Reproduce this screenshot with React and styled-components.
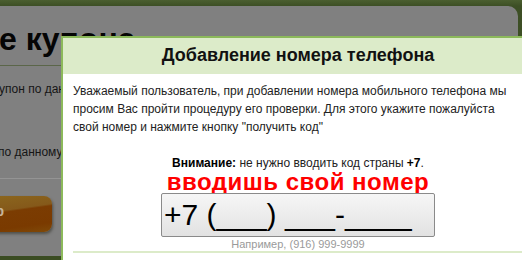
import React from 'react';
import styled, { createGlobalStyle } from 'styled-components';

const Global = createGlobalStyle`
  html, body { margin: 0; padding: 0; }
  body {
    width: 522px; height: 260px; overflow: hidden;
    background: #3c4e24;
    font-family: Arial, "Liberation Sans", sans-serif;
  }
`;

const Screen = styled.div`
  position: relative;
  width: 522px;
  height: 260px;
  overflow: hidden;
  box-sizing: border-box;
  padding: 6px 4px 4px 0;
  background: linear-gradient(#4b5f30, #3d4f25 6px, #3b4d23);
`;

const Page = styled.div`
  height: 100%;
  background: #808080;
  border-top-right-radius: 10px;
  display: flex;
  flex-direction: column;
  overflow: hidden;
`;

const PageTitle = styled.h1`
  margin: 17px 0 0 -1px;
  font: bold 32px/32px Arial, "Liberation Sans", sans-serif;
  color: #050505;
  white-space: nowrap;
`;

const Rule = styled.div`
  height: 1px;
  margin-top: ${p => p.$top}px;
  background: ${p => p.$color};
`;

const PageText = styled.div`
  margin: ${p => p.$top}px 0 0 ${p => p.$left}px;
  font-size: 12px;
  line-height: 16px;
  color: #151515;
  white-space: nowrap;
`;

const OrangeButton = styled.div`
  margin: 17px 0 0 -40px;
  width: 92px;
  height: 36px;
  box-sizing: border-box;
  border-radius: 8px;
  background: linear-gradient(172deg, #8d6a1f 0%, #85591a 42%, #7b3c02 46%, #7a3a00 80%, #7f4a08 100%);
  box-shadow: 1px 2px 3px rgba(40, 40, 30, 0.55);
  display: flex;
  align-items: center;
  justify-content: flex-end;
  padding: 0 48px 6px 0;
  font: bold 14px Arial, "Liberation Sans", sans-serif;
  color: #c7b49a;
`;

const Modal = styled.div`
  position: absolute;
  left: 61px;
  top: 36px;
  width: 474px;
  height: 260px;
  box-sizing: border-box;
  border: 2px solid #8cb95b;
  background: #fff;
  display: flex;
  flex-direction: column;
`;

const ModalHeader = styled.div`
  height: 36px;
  box-sizing: border-box;
  padding-bottom: 2px;
  background: #dcebc9;
  text-align: center;
  font: bold 18px/34px Arial, "Liberation Sans", sans-serif;
  color: #111;
  white-space: nowrap;
`;

const ModalBody = styled.div`
  padding: 8px 10px 0;
  display: flex;
  flex-direction: column;
`;

const Intro = styled.p`
  margin: 0;
  font-size: 12px;
  line-height: 18px;
  color: #222;
  white-space: nowrap;
`;

const Notice = styled.p`
  margin: 18px 0 0;
  font-size: 12px;
  line-height: 18px;
  color: #222;
  text-align: center;
  white-space: nowrap;
  b { color: #000; }
`;

const Hint = styled.div`
  font: bold 24px/20px Arial, "Liberation Sans", sans-serif;
  letter-spacing: 0.5px;
  color: #ff0000;
  text-align: center;
  white-space: nowrap;
`;

const PhoneInput = styled.input`
  display: block;
  margin: 1px auto 0;
  width: 274px;
  height: 44px;
  box-sizing: border-box;
  border: 1px solid #8a8a8a;
  border-radius: 2px;
  padding: 0 2px;
  background: linear-gradient(#f6f6f6, #e2e2e2);
  font: 30px/42px Arial, "Liberation Sans", sans-serif;
  color: #000;
  outline: none;
`;

const Example = styled.div`
  font-size: 11px;
  line-height: 14px;
  color: #9a9a9a;
  text-align: center;
`;

const Divider = styled.div`
  height: 2px;
  background: #dcebc9;
`;

export default function App() {
  return (
    <>
      <Global />
      <Screen>
        <Page>
          <PageTitle>е купона</PageTitle>
          <Rule $top={10} $color="#5b6649" />
          <PageText $top={15} $left={-1}>упон по данному купону</PageText>
          <PageText $top={47} $left={-2}>по данному купону</PageText>
          <Rule $top={18} $color="#949494" />
          <OrangeButton>р</OrangeButton>
        </Page>
        <Modal>
          <ModalHeader>Добавление номера телефона</ModalHeader>
          <ModalBody>
            <Intro>
              Уважаемый пользователь, при добавлении номера мобильного телефона мы<br />
              просим Вас пройти процедуру его проверки. Для этого укажите пожалуйста<br />
              свой номер и нажмите кнопку "получить код"
            </Intro>
            <Notice>
              <b>Внимание:</b> не нужно вводить код страны <b>+7</b>.
            </Notice>
            <Hint>вводишь свой номер</Hint>
            <PhoneInput readOnly value="+7 (___) ___-____" />
            <Example>Например, (916) 999-9999</Example>
            <Divider />
          </ModalBody>
        </Modal>
      </Screen>
    </>
  );
}
